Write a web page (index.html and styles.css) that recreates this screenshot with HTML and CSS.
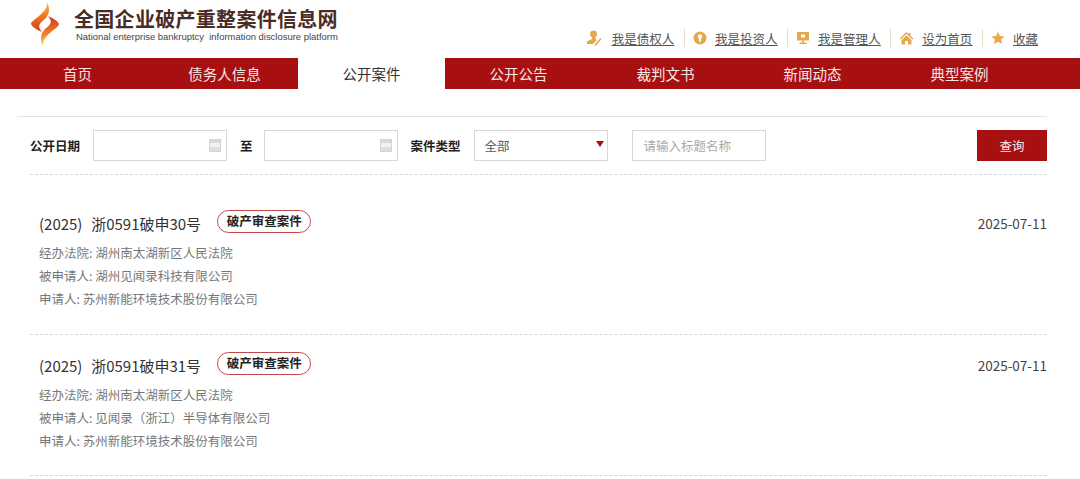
FILE: index.html
```html
<!DOCTYPE html>
<html>
<head>
  <meta charset="utf-8">
  <title>全国企业破产重整案件信息网</title>
  <link rel="stylesheet" href="styles.css">
</head>
<body>
  <div class="header">
    <div class="brand">
      <svg class="logo" width="30" height="46" viewBox="0 0 30 46">
        <defs>
          <linearGradient id="flame-a" x1="0" y1="0" x2="0" y2="1">
            <stop offset="0" stop-color="#f7c04a"/>
            <stop offset="0.45" stop-color="#ee7a24"/>
            <stop offset="1" stop-color="#cf3a1c"/>
          </linearGradient>
          <linearGradient id="flame-b" x1="0" y1="0" x2="0" y2="1">
            <stop offset="0" stop-color="#cf3a1c"/>
            <stop offset="0.55" stop-color="#ee7a24"/>
            <stop offset="1" stop-color="#fbd25a"/>
          </linearGradient>
        </defs>
        <path fill="url(#flame-a)" d="M17 1C18 8 12 12 8 16C4 19 1 21 1 23C3 27 8 29 12 31C10 28 8 26 10 23C12 20 14 19 15 18C20 13 20 7 17 1Z"/>
        <path fill="url(#flame-b)" d="M13 45C12 38 18 34 22 30C26 27 29 25 29 23C27 19 22 17 18 15C20 18 22 20 20 23C18 26 16 27 15 28C10 33 10 39 13 45Z"/>
      </svg>
      <div class="brand-text">
        <div class="brand-name">全国企业破产重整案件信息网</div>
        <div class="brand-en">National enterprise bankruptcy&nbsp; information disclosure platform</div>
      </div>
    </div>
    <div class="toplinks">
      <a class="toplink" href="#">
        <svg width="18" height="17" viewBox="0 0 18 17"><circle cx="7.500" cy="4" r="3.500" fill="#e5a94b"/><path d="M6 7h3l1.500 3.500L7 14H1v-1.500C1 10.500 4.500 10 6 9z" fill="#e5a94b"/><path d="M9 15.500l6-7" stroke="#e5a94b" stroke-width="1.600" fill="none"/></svg>
        <span>我是债权人</span>
      </a>
      <a class="toplink" href="#">
        <svg width="14" height="14" viewBox="0 0 14 14"><circle cx="7" cy="7" r="6.500" fill="#e5a94b"/><circle cx="7" cy="5.400" r="2.200" fill="#fff"/><rect x="6" y="6" width="2" height="4.500" fill="#fff"/></svg>
        <span>我是投资人</span>
      </a>
      <a class="toplink" href="#">
        <svg width="14" height="14" viewBox="0 0 14 14"><rect x="1" y="1" width="12" height="8.500" fill="#e5a94b"/><rect x="5" y="3.500" width="4" height="3" fill="#fff"/><rect x="6" y="9.500" width="2" height="2" fill="#e5a94b"/><rect x="3.500" y="11.500" width="7" height="1.500" fill="#e5a94b"/></svg>
        <span>我是管理人</span>
      </a>
      <a class="toplink" href="#">
        <svg width="15" height="14" viewBox="0 0 15 14"><path d="M7.500 1L0.500 7.500l1 1L7.500 3l6 5.500 1-1-3-2.800V2h-2v1z" fill="#e5a94b"/><path d="M2.500 9L7.500 4.500 12.500 9v4.500H9V10H6v3.500H2.500z" fill="#e5a94b"/></svg>
        <span>设为首页</span>
      </a>
      <a class="toplink" href="#">
        <svg width="14" height="14" viewBox="0 0 14 14"><path d="M7 .8l1.900 4.200 4.600.5-3.400 3.100 1 4.500L7 10.800l-4.100 2.300 1-4.500L.5 5.500l4.600-.5z" fill="#e5a94b"/></svg>
        <span>收藏</span>
      </a>
    </div>
  </div>

  <ul class="nav">
    <li>首页</li>
    <li>债务人信息</li>
    <li class="active">公开案件</li>
    <li>公开公告</li>
    <li>裁判文书</li>
    <li>新闻动态</li>
    <li>典型案例</li>
  </ul>

  <div class="container">
    <form class="search">
      <label>公开日期</label>
      <div class="field date-field"><span class="cal"></span></div>
      <label class="to">至</label>
      <div class="field date-field"><span class="cal"></span></div>
      <label class="type-label">案件类型</label>
      <div class="field select-field">全部<span class="arrow"></span></div>
      <div class="field title-field">请输入标题名称</div>
      <button type="button" class="query">查询</button>
    </form>

    <div class="case">
      <div class="case-top">
        <div class="case-title">(2025)&nbsp; 浙0591破申30号</div>
        <span class="tag">破产审查案件</span>
        <div class="case-date">2025-07-11</div>
      </div>
      <p>经办法院: 湖州南太湖新区人民法院</p>
      <p>被申请人: 湖州见闻录科技有限公司</p>
      <p>申请人: 苏州新能环境技术股份有限公司</p>
    </div>

    <div class="case">
      <div class="case-top">
        <div class="case-title">(2025)&nbsp; 浙0591破申31号</div>
        <span class="tag">破产审查案件</span>
        <div class="case-date">2025-07-11</div>
      </div>
      <p>经办法院: 湖州南太湖新区人民法院</p>
      <p>被申请人: 见闻录（浙江）半导体有限公司</p>
      <p>申请人: 苏州新能环境技术股份有限公司</p>
    </div>
  </div>
</body>
</html>
```

FILE: styles.css
```css
* {
  box-sizing: border-box;
}

body {
  margin: 0;
  font-family: "Noto Sans CJK SC", "Liberation Sans", sans-serif;
  font-size: 12.5px;
  color: #333;
  background: #fff;
}

.header {
  height: 58px;
  padding-left: 30px;
  display: flex;
  justify-content: space-between;
}

.brand {
  display: flex;
  padding-top: 1px;
}

.logo {
  margin-right: 14px;
}

.brand-text {
  padding-top: 6px;
}

.brand-name {
  font-size: 20px;
  line-height: 24px;
  font-weight: bold;
  letter-spacing: 0.3px;
  color: #4a2c24;
}

.brand-en {
  font-family: "Liberation Sans", sans-serif;
  font-size: 9.45px;
  line-height: 10px;
  margin-top: 1px;
  margin-left: 2px;
  color: #444;
}

.toplinks {
  display: flex;
  align-items: center;
  height: 18px;
  margin-top: 29px;
  margin-right: 42px;
}

.toplink {
  display: flex;
  align-items: center;
  gap: 8px;
  padding: 0 9.7px 0 8px;
  height: 18px;
  border-right: 1px solid #e6dccb;
  color: #555;
  font-size: 12.5px;
}

.toplink:last-child {
  border-right: 0;
  padding-right: 0;
}

.toplink span {
  text-decoration: underline;
}

.nav {
  list-style: none;
  margin: 0;
  padding: 0 0 0 4px;
  height: 31px;
  display: grid;
  grid-template-columns: repeat(7, 147px);
  background: #a80f11;
}

.nav li {
  line-height: 31px;
  font-size: 14.5px;
  text-align: center;
  color: #f6e6e6;
}

.nav li.active {
  background: #fff;
  color: #333;
}

.container {
  margin: 27px 33px 0 17px;
  border-top: 1px solid #e2e2e2;
}

.search {
  margin: 0 0 0 13px;
  padding-top: 13px;
  height: 58px;
  display: flex;
  align-items: flex-start;
  border-bottom: 1px dashed #d8d8d8;
}

.search label {
  font-size: 12.5px;
  font-weight: bold;
  line-height: 31px;
  color: #222;
}

.field {
  height: 31px;
  border: 1px solid #d8d8d8;
  background: #fff;
  line-height: 29px;
  position: relative;
}

.date-field {
  width: 134px;
  margin-left: 13px;
}

.to {
  margin-left: 13px;
  margin-right: -2px;
}

/* little calendar glyph inside the date inputs */
.cal {
  position: absolute;
  right: 5px;
  top: 8px;
  width: 12px;
  height: 13px;
  border: 1px solid #d4d4d4;
  background: linear-gradient(#d8d8d8 3px, #f2f2f2 3px, #f2f2f2 7px, #dedede 7px);
}

.type-label {
  margin-left: 13px;
}

.select-field {
  width: 134px;
  margin-left: 13px;
  padding-left: 10px;
  color: #555;
}

.arrow {
  position: absolute;
  right: 3px;
  top: 10px;
  border: 4px solid transparent;
  border-top: 6px solid #a80f11;
  border-bottom: 0;
}

.title-field {
  width: 134px;
  margin-left: 24px;
  padding-left: 11px;
  color: #aaa;
}

.query {
  margin-left: auto;
  width: 70px;
  height: 31px;
  border: 0;
  background: #a80f11;
  color: #f6e6e6;
  font-family: inherit;
  font-size: 12.5px;
}

.case {
  margin-left: 13px;
  height: 160px;
  padding: 35px 0 0 9px;
  border-bottom: 1px dashed #d8d8d8;
}

.case + .case {
  height: 141px;
  padding-top: 17px;
}

.case-top {
  display: flex;
  align-items: center;
  height: 26px;
  margin-bottom: 5px;
}

.case-title {
  font-size: 15px;
  word-spacing: 1px;
  color: #333;
}

.tag {
  align-self: flex-start;
  margin-left: 16px;
  height: 23px;
  line-height: 20px;
  padding: 0 8.5px;
  border: 1px solid #c04a4a;
  border-radius: 12px;
  font-size: 12.5px;
  font-weight: bold;
  color: #222;
}

.case-date {
  margin-left: auto;
  font-size: 13.5px;
  color: #444;
}

.case p {
  margin: 0;
  font-size: 12.5px;
  line-height: 23px;
  color: #777;
}
```
